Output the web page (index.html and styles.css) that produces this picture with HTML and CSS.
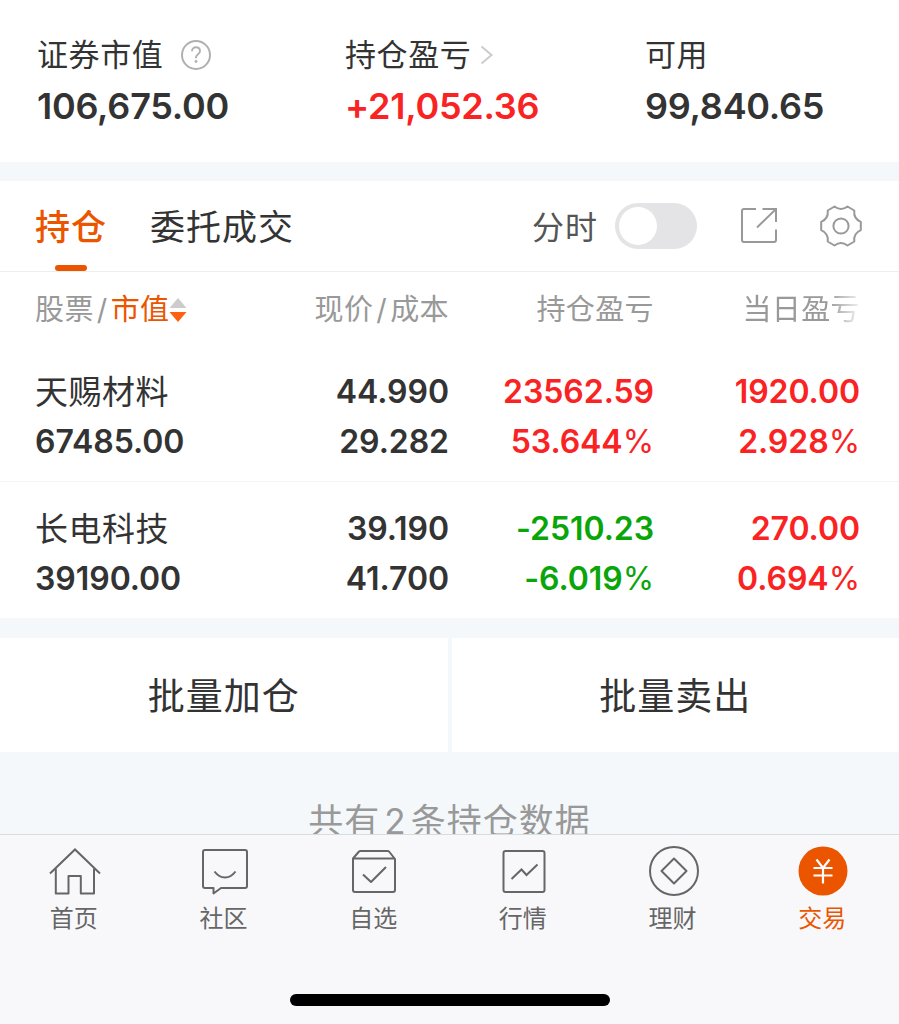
FILE: index.html
```html
<!DOCTYPE html>
<html lang="zh-CN">
  <head>
    <meta charset="UTF-8" />
    <meta name="viewport" content="width=device-width, initial-scale=1.0" />
    <title>持仓</title>
    <link rel="stylesheet" href="styles.css" />
  </head>
  <body>
    <div id="root">
      <div class="summary">
        <div class="summary_item market">
          <div class="summary_label">
            <span>证券市值</span>
            <svg class="icon_help" width="32" height="32" viewBox="0 0 32 32" fill="none" stroke="#b0b0b0">
              <circle cx="16" cy="16" r="14" stroke-width="2" />
              <path d="M12 12.3c0-2.400 1.700-4 4-4s4 1.600 4 3.800c0 3.100-4 3.300-4 6.500v.7" stroke-width="1.900" />
              <circle cx="16" cy="22.500" r="1.400" fill="#b0b0b0" stroke="none" />
            </svg>
          </div>
          <div class="summary_value">106,675.00</div>
        </div>
        <div class="summary_item profit">
          <div class="summary_label">
            <span>持仓盈亏</span>
            <svg class="icon_arrow" width="14" height="20" viewBox="0 0 14 20" fill="none" stroke="#ccc" stroke-width="2">
              <path d="M1.500 1.500 11.500 10 1.500 18.500" />
            </svg>
          </div>
          <div class="summary_value red">+21,052.36</div>
        </div>
        <div class="summary_item">
          <div class="summary_label"><span>可用</span></div>
          <div class="summary_value">99,840.65</div>
        </div>
      </div>

      <div class="tabs">
        <div class="tab active">持仓</div>
        <div class="tab">委托成交</div>
        <div class="tools">
          <span class="tools_label">分时</span>
          <div class="switch"><div class="switch_knob"></div></div>
          <svg class="icon_share" width="38" height="38" viewBox="0 0 38 38" fill="none" stroke="#999" stroke-width="2">
            <path d="M16 2H4a2 2 0 0 0-2 2v29a2 2 0 0 0 2 2h30a2 2 0 0 0 2-2V22.500M22.500 2H36V15M36 2 17 20.500" />
          </svg>
          <svg class="icon_gear" width="44" height="44" viewBox="0 0 44 44" fill="none" stroke="#999" stroke-width="2" stroke-linejoin="round">
            <path d="M15.500 2.500Q22 7.500 28.500 2.500L35.300 6.500Q34.300 14.500 41.800 17.800V26.200Q34.300 29.500 35.300 37.500L28.500 41.500Q22 36.500 15.500 41.500L8.700 37.500Q9.700 29.500 2.200 26.200V17.800Q9.700 14.500 8.700 6.500Z" />
            <circle cx="22" cy="22" r="7.600" />
          </svg>
        </div>
      </div>

      <div class="table">
        <div class="row head">
          <div class="cell">
            股票<i class="slash">/</i><span class="sort">市值</span>
            <svg class="icon_sort" width="18" height="26" viewBox="0 0 18 26">
              <path d="M9 1 17.500 11H.5Z" fill="#ccc" />
              <path d="M9 25 17.500 15H.5Z" fill="#ff6010" />
            </svg>
          </div>
          <div class="cell">现价<i class="slash">/</i>成本</div>
          <div class="cell">持仓盈亏</div>
          <div class="cell fade">当日盈亏</div>
        </div>
        <div class="row">
          <div class="cell"><p class="name">天赐材料</p><p>67485.00</p></div>
          <div class="cell"><p>44.990</p><p>29.282</p></div>
          <div class="cell red"><p>23562.59</p><p>53.644<span class="pct">%</span></p></div>
          <div class="cell red"><p>1920.00</p><p>2.928<span class="pct">%</span></p></div>
        </div>
        <div class="row">
          <div class="cell"><p class="name">长电科技</p><p>39190.00</p></div>
          <div class="cell"><p>39.190</p><p>41.700</p></div>
          <div class="cell green"><p>-2510.23</p><p>-6.019<span class="pct">%</span></p></div>
          <div class="cell red"><p>270.00</p><p>0.694<span class="pct">%</span></p></div>
        </div>
      </div>

      <div class="actions">
        <div class="action">批量加仓</div>
        <div class="action">批量卖出</div>
      </div>

      <div class="count">共有<span class="count_num">2</span>条持仓数据</div>

      <div class="nav">
        <div class="nav_item">
          <svg width="52" height="52" viewBox="0 0 52 52" fill="none" stroke="#666" stroke-width="2">
            <path d="M1 28.500 26 4.500 51 28.500" />
            <path d="M6.800 23.500V48.500H19.500V31H31.800V48.500H45V23.500" stroke-linejoin="round" />
          </svg>
          <span>首页</span>
        </div>
        <div class="nav_item">
          <svg width="52" height="52" viewBox="0 0 52 52" fill="none" stroke="#666" stroke-width="2" stroke-linejoin="round">
            <path d="M6 5H46a2 2 0 0 1 2 2V41a2 2 0 0 1-2 2H22L14.500 48.500V43H6a2 2 0 0 1-2-2V7a2 2 0 0 1 2-2Z" />
            <path d="M15.500 26.500Q20 32.500 26 32.500T36.500 26.500" />
          </svg>
          <span>社区</span>
        </div>
        <div class="nav_item">
          <svg width="52" height="52" viewBox="0 0 52 52" fill="none" stroke="#666" stroke-width="2" stroke-linejoin="round">
            <path d="M5 14V45a2 2 0 0 0 2 2H45a2 2 0 0 0 2-2V14L41 6.500Q40.500 6 39.500 6H12.500Q11.500 6 11 6.500L5 13.500H47" />
            <path d="M15 29.500 23 37 38 22" />
          </svg>
          <span>自选</span>
        </div>
        <div class="nav_item">
          <svg width="52" height="52" viewBox="0 0 52 52" fill="none" stroke="#666" stroke-width="2">
            <rect x="5.500" y="6" width="41" height="41" rx="2" />
            <path d="M13.500 34 23.500 24.500 28.500 30 39.500 19.500" />
          </svg>
          <span>行情</span>
        </div>
        <div class="nav_item">
          <svg width="52" height="52" viewBox="0 0 52 52" fill="none" stroke="#666" stroke-width="2">
            <circle cx="26" cy="26" r="24" />
            <path d="M26 13.500 38.500 26 26 38.500 13.500 26Z" stroke-linejoin="round" />
          </svg>
          <span>理财</span>
        </div>
        <div class="nav_item active">
          <svg width="52" height="52" viewBox="0 0 52 52" fill="none" stroke="#fff" stroke-width="2.200">
            <circle cx="26" cy="26" r="24.500" fill="#eb5500" stroke="none" />
            <path d="M19.500 14.500 26 23 32.500 14.500M16.500 23H35.500M16.500 30.500H35.500M26 23V38.500" />
          </svg>
          <span>交易</span>
        </div>
      </div>
      <div class="home_bar"></div>
    </div>
  </body>
</html>
```

FILE: styles.css
```css
* {
  box-sizing: border-box;
}
body {
  margin: 0;
  background-color: #fff;
  color: #333;
  font-family: Inter, "Noto Sans CJK SC", sans-serif;
}
svg {
  display: block;
  flex-shrink: 0;
}
p {
  margin: 0;
}
#root {
  display: flex;
  flex-direction: column;
  width: 899px;
  height: 1024px;
  overflow: hidden;
  background-color: #f4f8fa;
}
.red {
  color: #fa2323;
}
.green {
  color: #09a509;
}

/* 资产概览 */
.summary {
  display: flex;
  height: 162px;
  padding: 35px 0 0 37px;
  background-color: #fff;
}
.market {
  width: 308px;
}
.profit {
  width: 300px;
}
.summary_label {
  display: flex;
  align-items: center;
  height: 40px;
  font-size: 31px;
  line-height: 42px;
  letter-spacing: 0.6px;
}
.icon_help {
  margin-left: 17px;
}
.icon_arrow {
  margin-left: 9px;
}
.summary_value {
  margin-top: 7px;
  font-size: 36px;
  font-weight: 600;
  line-height: 48px;
  letter-spacing: -0.25px;
}

/* 标签栏 */
.tabs {
  display: flex;
  height: 91px;
  margin-top: 19px;
  padding-left: 35px;
  border-bottom: 1px solid #eee;
  background-color: #fff;
}
.tab {
  position: relative;
  margin-right: 43px;
  font-size: 35px;
  line-height: 93px;
  letter-spacing: 1px;
}
.tab.active {
  color: #eb5500;
  font-weight: 500;
}
.tab.active::after {
  content: "";
  position: absolute;
  left: 20px;
  bottom: 0;
  width: 32px;
  height: 6px;
  border-radius: 3px;
  background-color: #eb5500;
}
.tools {
  display: flex;
  align-items: center;
  margin-left: auto;
  padding-right: 36px;
}
.tools_label {
  padding-bottom: 3px;
  color: #555;
  font-size: 32px;
  letter-spacing: 1px;
}
.switch {
  width: 82px;
  height: 46px;
  margin-left: 17px;
  padding: 4px;
  border-radius: 23px;
  background-color: #e4e4e6;
}
.switch_knob {
  width: 38px;
  height: 38px;
  border-radius: 50%;
  background-color: #fff;
}
.icon_share {
  margin-left: 43px;
}
.icon_gear {
  margin-left: 41px;
}

/* 持仓列表 */
.table {
  background-color: #fff;
}
.row {
  display: grid;
  grid-template-columns: 214px 200px 205px 206px;
  height: 137px;
  padding: 22px 0 0 35px;
  border-bottom: 1px solid #f5f5f5;
  font-size: 32px;
  font-weight: 600;
  line-height: 50px;
  letter-spacing: -0.05px;
}
.row:last-child {
  height: 136px;
  border-bottom: none;
}
.cell {
  text-align: right;
}
.cell:first-child {
  text-align: left;
}
.name {
  font-size: 33px;
  font-weight: 400;
  letter-spacing: 0.5px;
}
.pct {
  font-weight: 400;
}
.row.head {
  height: 73px;
  padding-top: 13px;
  border-bottom: none;
  color: #999;
  font-size: 29px;
  font-weight: 400;
  letter-spacing: 0.4px;
}
.head .cell:first-child {
  display: flex;
  align-items: center;
  height: 50px;
}
.slash {
  margin: 0 3px;
  font-style: normal;
}
.sort {
  color: #eb5500;
}
.fade {
  -webkit-mask-image: linear-gradient(to right, #000 175px, transparent 210px);
  mask-image: linear-gradient(to right, #000 175px, transparent 210px);
}

/* 批量操作 */
.actions {
  display: flex;
  gap: 4px;
  height: 114px;
  margin-top: 20px;
}
.action {
  flex: 1;
  background-color: #fff;
  font-size: 37px;
  line-height: 118px;
  letter-spacing: 1px;
  text-align: center;
}
.count {
  height: 82px;
  padding-top: 44px;
  overflow: hidden;
  color: #999;
  font-size: 35px;
  line-height: 50px;
  letter-spacing: 1px;
  text-align: center;
}
.count_num {
  margin: 0 4px;
}

/* 底部导航 */
.nav {
  display: flex;
  height: 160px;
  padding: 10px 1px 0 0;
  border-top: 1px solid #d8dcde;
  background-color: #f8f8fb;
}
.nav_item {
  display: flex;
  flex: 1;
  flex-direction: column;
  align-items: center;
  color: #666;
  font-size: 24px;
  line-height: 44px;
}
.nav_item span {
  margin-right: 2px;
}
.nav_item.active {
  color: #eb5500;
}
.home_bar {
  flex: 1;
  background-color: #f8f8fb;
}
.home_bar::before {
  content: "";
  display: block;
  width: 320px;
  height: 12px;
  margin: 0 auto;
  border-radius: 6px;
  background-color: #000;
}
```
